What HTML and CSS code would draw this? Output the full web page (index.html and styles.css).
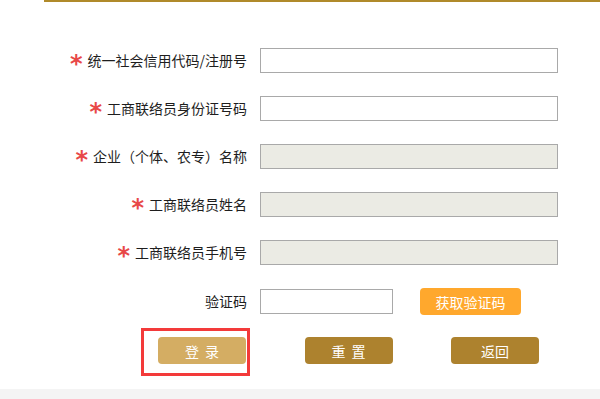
FILE: index.html
```html
<!doctype html>
<html>
  <head>
    <meta charset="UTF-8" />
    <title>工商联络员登录</title>
    <link rel="stylesheet" href="styles.css">
  </head>
  <body>
    <div class="page">
      <div class="top-line"></div>

      <div class="form">
        <div class="row">
          <label class="label" for="code"><span class="req">*</span>统一社会信用代码/注册号</label>
          <input class="field" id="code" type="text" />
        </div>

        <div class="row">
          <label class="label" for="idno"><span class="req">*</span>工商联络员身份证号码</label>
          <input class="field" id="idno" type="text" />
        </div>

        <div class="row">
          <label class="label" for="ent"><span class="req">*</span>企业（个体、农专）名称</label>
          <input class="field" id="ent" type="text" disabled />
        </div>

        <div class="row">
          <label class="label" for="name"><span class="req">*</span>工商联络员姓名</label>
          <input class="field" id="name" type="text" disabled />
        </div>

        <div class="row">
          <label class="label" for="phone"><span class="req">*</span>工商联络员手机号</label>
          <input class="field" id="phone" type="text" disabled />
        </div>

        <div class="row">
          <label class="label" for="vcode">验证码</label>
          <div class="code-group">
            <input class="field short" id="vcode" type="text" />
            <button class="btn-code">获取验证码</button>
          </div>
        </div>
      </div>

      <div class="button-group">
        <button class="btn login">登 录</button>
        <button class="btn">重 置</button>
        <button class="btn">返回</button>
        <!-- highlight box around the login button -->
        <div class="mark"></div>
      </div>
    </div>
  </body>
</html>
```

FILE: styles.css
```css
body {
  font-family: "Noto Sans CJK SC", "Noto Sans", sans-serif;
  margin: 0;
  padding: 0;
  background-color: #f4f4f4;
  color: #1e1e1e;
  font-size: 14px;
}

.page {
  background: white;
  height: 389px;
  box-shadow: 0 2px 5px rgba(0, 0, 0, 0.22);
  overflow: hidden;
}

.top-line {
  margin-left: 44px;
  border-top: 2px solid #b08a2a;
}

.form {
  display: flex;
  flex-direction: column;
  gap: 23px;
  padding-top: 46px;
}

.row {
  display: grid;
  grid-template-columns: 247px 1fr;
  column-gap: 13px;
  align-items: center;
  height: 25px;
}

.label {
  display: flex;
  justify-content: flex-end;
  align-items: center;
  line-height: 25px;
  white-space: nowrap;
}

.req {
  color: #e84848;
  font-family: "DejaVu Sans", sans-serif;
  font-weight: bold;
  font-size: 24px;
  margin-right: 5px;
  position: relative;
  top: 4px;
}

.field {
  box-sizing: border-box;
  width: 298px;
  height: 25px;
  border: 1px solid #a9a9a9;
  background: white;
  margin: 0;
  padding: 0 4px;
  font-family: inherit;
}

.field:disabled {
  background: #ebebe4;
}

.field.short {
  width: 133px;
}

.code-group {
  display: flex;
  align-items: center;
  gap: 27px;
}

button {
  border: none;
  border-radius: 4px;
  cursor: pointer;
  font-family: inherit;
  font-size: 14px;
  color: white;
  padding: 0;
}

.btn-code {
  width: 101px;
  height: 27px;
  background-color: #ffa82d;
}

.button-group {
  position: relative;
  display: flex;
  gap: 58.5px;
  padding-left: 158px;
  margin-top: 24px;
}

.btn {
  width: 88px;
  height: 27px;
  background-color: #ad822e;
  word-spacing: 3px;
}

.btn.login {
  background-color: #d4ad63;
}

.mark {
  position: absolute;
  left: 141px;
  top: -9px;
  width: 103px;
  height: 42px;
  border: 3px solid #f33a3a;
}
```
